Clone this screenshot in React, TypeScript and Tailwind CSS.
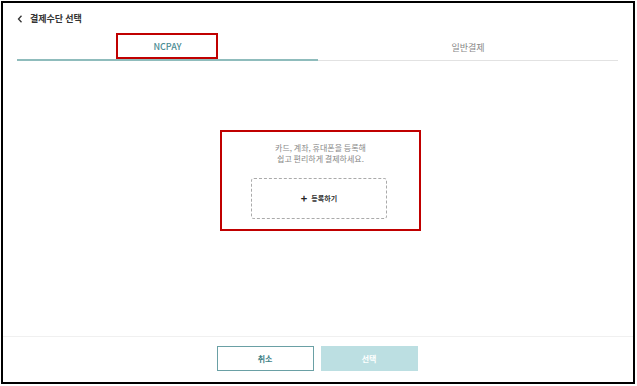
import React from "react";

export default function App() {
  const font = { fontFamily: '"Noto Sans CJK KR", "Noto Sans", sans-serif' };
  return (
    <div className="w-[637px] h-[386px] bg-white pl-[1px] pt-[1px]" style={font}>
      <div className="w-[634px] h-[383px] border-2 border-black flex flex-col">
        {/* header */}
        <div className="h-[30px] flex items-center pl-[14px] pt-[1px]">
          <svg width="6" height="8" viewBox="0 0 6 8" className="mr-[7px]">
            <path d="M4.5 0.8 L1.5 4 L4.5 7.2" fill="none" stroke="#333" strokeWidth="1.3" />
          </svg>
          <span className="text-[9px] font-bold text-[#333] leading-none">결제수단 선택</span>
        </div>
        {/* tabs */}
        <div className="flex mx-[14px] h-[28px]">
          <div className="relative w-[301px] flex items-center justify-center border-b-2 border-[#8fbcbc]">
            <span className="text-[9px] font-medium text-[#4b8c93] leading-none pt-[1px]">NCPAY</span>
            <div className="absolute left-[99px] top-0 w-[102px] h-[26px] border-2 border-[#c00000]" />
          </div>
          <div className="w-[300px] flex items-center justify-center border-b border-[#e2e2e2]">
            <span className="text-[9px] text-[#888] leading-none pt-[1px]">일반결제</span>
          </div>
        </div>
        {/* content */}
        <div className="flex-1 flex justify-center pt-[69px]">
          <div className="w-[201px] h-[101px] border-2 border-[#c00000] ml-[5px] flex flex-col items-center pt-[10px]">
            <p className="text-[8px] text-[#888] leading-[11px] text-center">
              카드, 계좌, 휴대폰을 등록해
              <br />
              쉽고 편리하게 결제하세요.
            </p>
            <div className="mt-[14px] w-[136px] h-[41px] border border-dashed border-[#aaa] rounded-[3px] flex items-center justify-center gap-[4px] mr-[3px]">
              <span className="text-[11px] font-bold text-[#222] leading-none">+</span>
              <span className="text-[7px] font-bold text-[#333] leading-none">등록하기</span>
            </div>
          </div>
        </div>
        {/* footer */}
        <div className="h-[46px] border-t border-[#f0f0f0] flex justify-center items-start pt-[9px] gap-[7px] pr-[2px]">
          <button className="w-[97px] h-[25px] border border-[#6aa0a5] bg-white text-[8px] font-bold text-[#3f8288]">
            취소
          </button>
          <button className="w-[97px] h-[25px] bg-[#bcdfe2] text-[8px] font-bold text-white">
            선택
          </button>
        </div>
      </div>
    </div>
  );
}
